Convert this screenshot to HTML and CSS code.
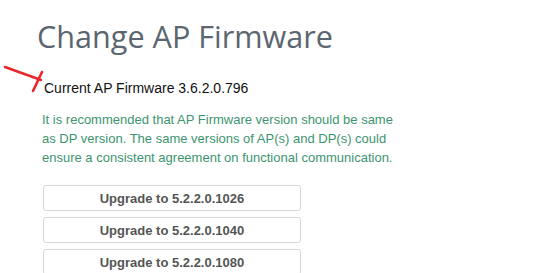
FILE: index.html
```html
<!DOCTYPE html>
<html>
  <head>
    <link rel="stylesheet" href="styles.css">
  </head>
  <body>
    <div class="page">
      <h1 class="title">Change AP Firmware</h1>
      <div class="current">
        <svg class="mark" width="46" height="32" viewBox="0 0 46 32">
          <path d="M2 3 L38 16" fill="none" stroke="#e8262b" stroke-width="2.4" stroke-linecap="round"/>
          <path d="M39 8 L30 27" fill="none" stroke="#e8262b" stroke-width="2.6" stroke-linecap="round"/>
        </svg>
        <p class="current-text">Current AP Firmware 3.6.2.0.796</p>
      </div>
      <p class="note">It is recommended that AP Firmware version should be same as DP version. The same versions of AP(s) and DP(s) could ensure a consistent agreement on functional communication.</p>
      <div class="upgrades">
        <button class="upgrade-button">Upgrade to 5.2.2.0.1026</button>
        <button class="upgrade-button">Upgrade to 5.2.2.0.1040</button>
        <button class="upgrade-button">Upgrade to 5.2.2.0.1080</button>
      </div>
    </div>
  </body>
</html>
```

FILE: styles.css
```css
body{
  margin: 0;
  background-color: white;
  font-family: "Liberation Sans", Arial, sans-serif;
}
.page{
  padding: 14px 0 0 37px;
}
.title{
  margin: 0;
  font-family: "Open Sans", sans-serif;
  font-weight: normal;
  font-size: 30.6px;
  line-height: 44px;
  color: #5b6670;
}
.current{
  position: relative;
  margin-top: 22px;
}
.mark{
  position: absolute;
  left: -34px;
  top: -16px;
  z-index: 2;
  outline: 1px solid transparent;
}
.current-text{
  margin: 0 0 0 7px;
  font-size: 14px;
  line-height: 17px;
  color: #111;
}
.note{
  margin: 13px 0 0 5px;
  width: 362px;
  font-size: 13px;
  line-height: 19px;
  color: #3d9470;
}
.upgrades{
  display: flex;
  flex-direction: column;
  gap: 6px;
  margin: 18px 0 0 6px;
}
.upgrade-button{
  width: 258px;
  height: 26px;
  padding: 0;
  border: 1px solid #d6d6d6;
  border-radius: 3px;
  background-color: white;
  font-family: "Liberation Sans", Arial, sans-serif;
  font-weight: bold;
  font-size: 13px;
  color: #555;
  cursor: pointer;
}
```
